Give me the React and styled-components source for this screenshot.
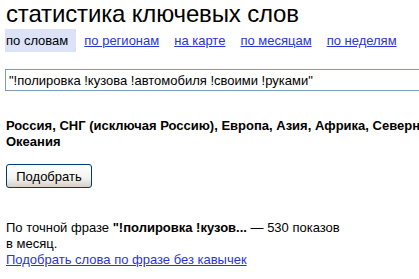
import React from 'react';
import styled, { createGlobalStyle } from 'styled-components';

const GlobalStyle = createGlobalStyle`
    body {
        margin: 0;
        background: #fff;
        font-family: "Liberation Sans", Arial, sans-serif;
        font-size: 13px;
        color: #000;
        overflow: hidden;
    }
`;

const Page = styled.div`
    width: 419px;
    height: 279px;
    padding-left: 5px;
    box-sizing: border-box;
    overflow: hidden;
`;

const Title = styled.h1`
    margin: 0 0 0 1px;
    font-weight: normal;
    font-size: 24px;
    line-height: 27px;
    letter-spacing: -0.15px;
    white-space: nowrap;
`;

const Tabs = styled.div`
    display: flex;
    align-items: stretch;
    margin-top: 2px;
    height: 23px;
`;

const Tab = styled.a`
    display: flex;
    align-items: center;
    margin-right: ${p => (p.$active ? '8px' : '15px')};
    padding: 0 ${p => (p.$active ? '8px' : '0')} 0 ${p => (p.$active ? '1px' : '0')};
    background: ${p => (p.$active ? '#dce3f9' : 'transparent')};
    color: ${p => (p.$active ? '#000' : '#2a35d4')};
    text-decoration: ${p => (p.$active ? 'none' : 'underline')};
    white-space: nowrap;
    cursor: pointer;
`;

const Query = styled.div`
    margin-top: 17px;
    width: 430px;
    height: 22px;
    border: 1px solid #7f9db9;
    box-sizing: border-box;
    display: flex;
    align-items: center;
    padding-left: 3px;
    white-space: nowrap;
`;

const Regions = styled.div`
    margin-top: 27px;
    margin-left: 1px;
    font-weight: bold;
    line-height: 16px;
    white-space: pre;
`;

const Button = styled.button`
    display: block;
    margin-top: 14px;
    margin-left: 1px;
    width: 86px;
    height: 24px;
    border: 1px solid #003c74;
    border-radius: 3px;
    background: linear-gradient(#ffffff, #f3f3ef 60%, #d6d0c5);
    font-family: inherit;
    font-size: 13px;
    color: #000;
    padding: 0;
`;

const Result = styled.div`
    margin-top: 32px;
    margin-left: 1px;
    line-height: 16px;
`;

const Link = styled.a`
    color: #2a35d4;
    text-decoration: underline;
    cursor: pointer;
`;

const tabs = ['по словам', 'по регионам', 'на карте', 'по месяцам', 'по неделям'];

const App = () => (
    <Page>
        <GlobalStyle />
        <Title>статистика ключевых слов</Title>
        <Tabs>
            {tabs.map((t, i) => (
                <Tab key={t} $active={i === 0}>{t}</Tab>
            ))}
        </Tabs>
        <Query>"!полировка !кузова !автомобиля !своими !руками"</Query>
        <Regions>
            {'Россия, СНГ (исключая Россию), Европа, Азия, Африка, Северная Америка, Южная Америка, Австралия и\nОкеания'}
        </Regions>
        <Button>Подобрать</Button>
        <Result>
            По точной фразе <b>"!полировка !кузов...</b> — 530 показов
            <br />
            в месяц.
            <br />
            <Link>Подобрать слова по фразе без кавычек</Link>
        </Result>
    </Page>
);

export default App;
